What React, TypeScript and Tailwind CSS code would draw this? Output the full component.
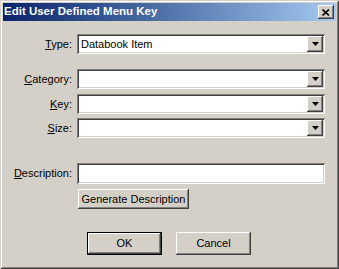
import type { ReactNode } from 'react';

const sunken =
  'bg-white shadow-[inset_1px_1px_0_#808080,inset_-1px_-1px_0_#ffffff,inset_2px_2px_0_#404040,inset_-2px_-2px_0_#d4d0c8]';
const raised =
  'bg-[#d4d0c8] shadow-[inset_-1px_-1px_0_#404040,inset_1px_1px_0_#ffffff,inset_-2px_-2px_0_#808080,inset_2px_2px_0_#d4d0c8]';

function Label({ children }: { children: ReactNode }) {
  return <div className="w-[70px] shrink-0 pr-[1px] text-right">{children}</div>;
}

function Arrow() {
  return (
    <svg width="7" height="4" viewBox="0 0 7 4">
      <path d="M0 0h7L3.5 4z" fill="#000" />
    </svg>
  );
}

function Combo({ value }: { value?: string }) {
  return (
    <div className={`relative flex h-[20px] w-[248px] items-center pl-[4px] ${sunken}`}>
      <span className="leading-none">{value}</span>
      <div className={`absolute right-[2px] top-[2px] bottom-[2px] flex w-[16px] items-center justify-center ${raised}`}>
        <Arrow />
      </div>
    </div>
  );
}

function Row({ label, children, className }: { label: ReactNode; children: ReactNode; className?: string }) {
  return (
    <div className={`flex items-center gap-[4px] ${className ?? ''}`}>
      <Label>{label}</Label>
      {children}
    </div>
  );
}

export default function App() {
  return (
    <div
      className="flex h-[269px] w-[339px] flex-col bg-[#d4d0c8] p-[3px] text-[11px] text-black shadow-[inset_1px_1px_0_#d4d0c8,inset_-1px_-1px_0_#404040,inset_2px_2px_0_#ffffff,inset_-2px_-2px_0_#808080]"
      style={{ fontFamily: '"Liberation Sans", Arial, sans-serif' }}
    >
      <div className="flex h-[18px] shrink-0 items-center justify-between bg-gradient-to-r from-[#0a246a] to-[#a6caf0] pl-[1px] pr-[2px]">
        <span className="text-[11.5px] font-bold text-white">Edit User Defined Menu Key</span>
        <div className={`flex h-[14px] w-[16px] items-center justify-center ${raised}`}>
          <svg width="8" height="7" viewBox="0 0 8 7">
            <path d="M0.5 0.5L7 6.5M7 0.5L0.5 6.5" stroke="#000" strokeWidth="1.6" />
          </svg>
        </div>
      </div>

      <div className="flex flex-col pt-[13px]">
        <Row
          label={
            <>
              <span className="underline">T</span>ype:
            </>
          }
        >
          <Combo value="Databook Item" />
        </Row>

        <Row
          className="mt-[15px]"
          label={
            <>
              <span className="underline">C</span>ategory:
            </>
          }
        >
          <Combo />
        </Row>
        <Row
          className="mt-[5px]"
          label={
            <>
              <span className="underline">K</span>ey:
            </>
          }
        >
          <Combo />
        </Row>
        <Row
          className="mt-[4px]"
          label={
            <>
              <span className="underline">S</span>ize:
            </>
          }
        >
          <Combo />
        </Row>

        <Row
          className="mt-[25px]"
          label={
            <>
              <span className="underline">D</span>escription:
            </>
          }
        >
          <div className={`h-[21px] w-[248px] ${sunken}`} />
        </Row>
        <div className="mt-[5px] pl-[75px]">
          <div className={`flex h-[20px] w-[111px] items-center justify-center ${raised}`}>
            Generate Description
          </div>
        </div>

        <div className="mt-[23px] flex gap-[14px] pl-[84px]">
          <div className="h-[23px] w-[75px] border border-black">
            <div className={`flex h-full w-full items-center justify-center ${raised}`}>OK</div>
          </div>
          <div className={`flex h-[23px] w-[75px] items-center justify-center ${raised}`}>Cancel</div>
        </div>
      </div>
    </div>
  );
}
